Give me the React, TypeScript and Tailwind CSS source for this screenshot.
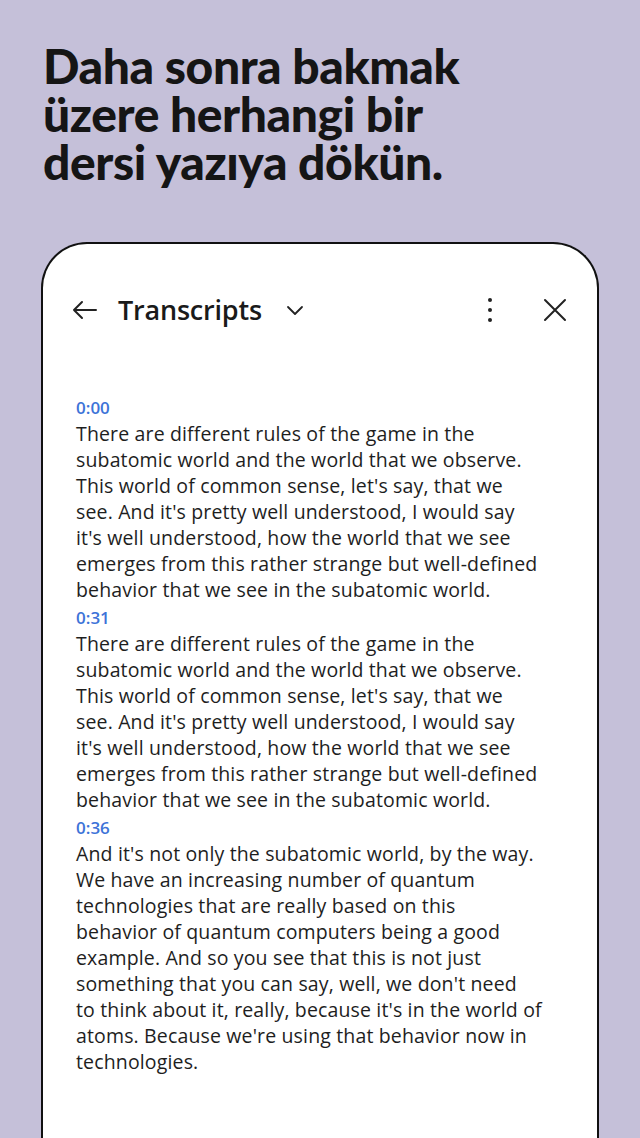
const blocks: { time: string; lines: string[] }[] = [
  {
    time: '0:00',
    lines: [
      'There are different rules of the game in the',
      'subatomic world and the world that we observe.',
      "This world of common sense, let's say, that we",
      "see. And it's pretty well understood, I would say",
      "it's well understood, how the world that we see",
      'emerges from this rather strange but well-defined',
      'behavior that we see in the subatomic world.',
    ],
  },
  {
    time: '0:31',
    lines: [
      'There are different rules of the game in the',
      'subatomic world and the world that we observe.',
      "This world of common sense, let's say, that we",
      "see. And it's pretty well understood, I would say",
      "it's well understood, how the world that we see",
      'emerges from this rather strange but well-defined',
      'behavior that we see in the subatomic world.',
    ],
  },
  {
    time: '0:36',
    lines: [
      "And it's not only the subatomic world, by the way.",
      'We have an increasing number of quantum',
      'technologies that are really based on this',
      'behavior of quantum computers being a good',
      'example. And so you see that this is not just',
      "something that you can say, well, we don't need",
      "to think about it, really, because it's in the world of",
      "atoms. Because we're using that behavior now in",
      'technologies.',
    ],
  },
]

export default function App() {
  return (
    <div className="h-[1138px] w-[640px] overflow-hidden bg-[#c5c0d9] font-['Lato',sans-serif]">
      <h1 className="px-[43px] pt-[42px] text-[48px] font-black leading-[48px] tracking-[-0.4px] text-[#151515]">
        Daha sonra bakmak
        <br />
        üzere herhangi bir
        <br />
        dersi yazıya dökün.
      </h1>

      <div className="mx-[41px] mt-[56px] h-[900px] rounded-t-[46px] border-2 border-b-0 border-[#111] bg-white">
        <div className="flex h-[64px] items-center pl-[29px] pr-[30px] pt-[66px]">
          <svg width="26" height="20" viewBox="0 0 26 20" fill="none" stroke="#222" strokeWidth="2" strokeLinecap="round" strokeLinejoin="round">
            <path d="M24 10H2M10 2L2 10l8 8" />
          </svg>
          <span className="ml-[20px] font-['Open_Sans',sans-serif] text-[27px] font-semibold tracking-[-0.2px] text-[#1a1a1a]">
            Transcripts
          </span>
          <svg className="ml-[24px]" width="18" height="12" viewBox="0 0 18 12" fill="none" stroke="#222" strokeWidth="1.8" strokeLinecap="round" strokeLinejoin="round">
            <path d="M2 3l7 7 7-7" />
          </svg>
          <div className="flex-1" />
          <div className="flex flex-col items-center gap-[6px]">
            <span className="h-[4px] w-[4px] rounded-full bg-[#222]" />
            <span className="h-[4px] w-[4px] rounded-full bg-[#222]" />
            <span className="h-[4px] w-[4px] rounded-full bg-[#222]" />
          </div>
          <svg className="ml-[51px]" width="24" height="24" viewBox="0 0 24 24" fill="none" stroke="#222" strokeWidth="2" strokeLinecap="round">
            <path d="M2 2l20 20M22 2L2 22" />
          </svg>
        </div>

        <div className="mt-[83px] pl-[33px] font-['Open_Sans',sans-serif] text-[#1e1e1e]">
          {blocks.map((b) => (
            <div key={b.time}>
              <div className="pt-[2px] text-[17px] font-semibold leading-[26px] text-[#3d73d8]">{b.time}</div>
              {b.lines.map((l, i) => (
                <div key={i} className="whitespace-nowrap text-[19.5px] leading-[26px] tracking-[0.15px]">
                  {l}
                </div>
              ))}
            </div>
          ))}
        </div>
      </div>
    </div>
  )
}
